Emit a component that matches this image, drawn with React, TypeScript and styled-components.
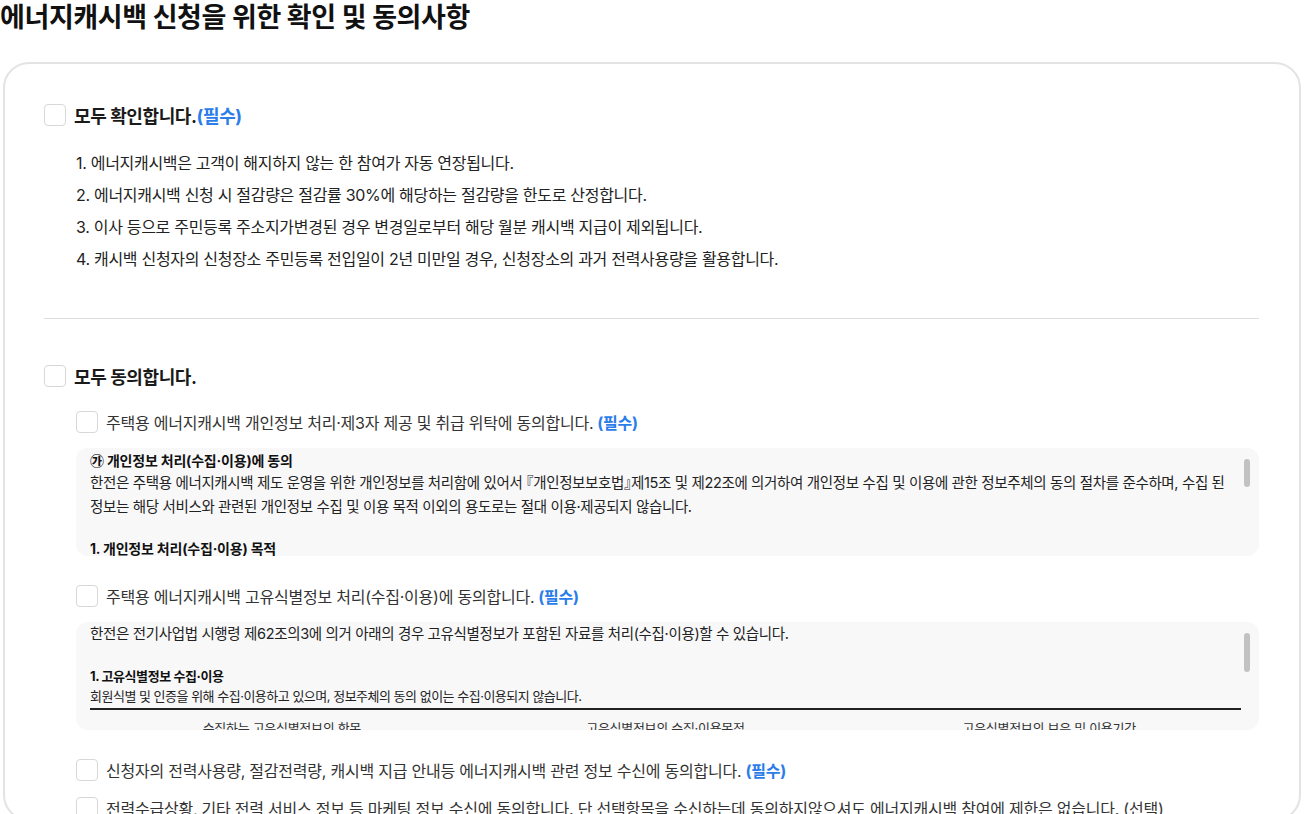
import React from 'react'
import styled, { createGlobalStyle } from 'styled-components'

const textDark = '#222222';
const blue = '#2b7de9';

const GlobalStyle = createGlobalStyle`
  html, body {
    margin: 0;
    padding: 0;
    background: #ffffff;
  }
  body {
    font-family: Inter, "Noto Sans CJK KR", sans-serif;
    color: ${textDark};
    overflow: hidden;
  }
`

const Page = styled.div`
  display: flex;
  flex-direction: column;
  height: 814px;
  overflow: hidden;
`

const Title = styled.h1`
  margin: 0;
  font-size: 27px;
  line-height: 36px;
  font-weight: 700;
  letter-spacing: -0.4px;
  color: #111111;
`

const Card = styled.section`
  margin: 26px 9px 0 3px;
  border: 2px solid #e3e3e3;
  border-radius: 26px;
  padding: 40px 40px 0 39px;
  flex: 1;
`

const CheckRow = styled.label<{ $main?: boolean }>`
  display: flex;
  align-items: center;
  gap: 8px;
  height: 22px;
  font-size: ${p => (p.$main ? '18px' : '16px')};
  font-weight: ${p => (p.$main ? 700 : 400)};
  letter-spacing: ${p => (p.$main ? '-0.4px' : '-0.23px')};
  color: ${p => (p.$main ? '#1a1a1a' : '#333333')};
  white-space: nowrap;
`

const Box = styled.input.attrs({ type: 'checkbox' })`
  appearance: none;
  margin: 0;
  flex: none;
  width: 22px;
  height: 22px;
  border: 1px solid #d8d8d8;
  border-radius: 4px;
  background: #ffffff;
  box-sizing: border-box;
`

const Required = styled.b<{ $tight?: boolean }>`
  color: ${blue};
  font-weight: 700;
  margin-left: ${p => (p.$tight ? '0' : '4px')};
`

const Notices = styled.ol`
  list-style: none;
  margin: 21px 0 0;
  padding: 0 0 0 32px;
  font-size: 16px;
  line-height: 32px;
  letter-spacing: -0.3px;
  color: ${textDark};
`

const Divider = styled.hr`
  margin: 43px 0 46px;
  border: 0;
  border-top: 1px solid #dedede;
`

const Agreements = styled.div`
  display: flex;
  flex-direction: column;
  gap: 16px;
  margin-top: 24px;
  padding-left: 32px;
`

const Agreement = styled.div<{ $withTerms?: boolean }>`
  display: flex;
  flex-direction: column;
  gap: 15px;
  margin-bottom: ${p => (p.$withTerms ? '13px' : '0')};
`

const Terms = styled.div`
  position: relative;
  background: #f8f8f9;
  border-radius: 12px;
  padding-right: 18px;
`

// the page is photographed without native scrollbars, so the thumb is drawn over the box
const Thumb = styled.span<{ $size: number }>`
  position: absolute;
  top: 11px;
  right: 9px;
  width: 6px;
  height: ${p => p.$size}px;
  border-radius: 3px;
  background: #c2c2c2;
`

const TermsScroll = styled.div`
  height: 108px;
  overflow-y: auto;
  box-sizing: border-box;
  padding: 0 0 0 14px;
  font-size: 14.5px;
  line-height: 24px;
  letter-spacing: -0.35px;
  color: ${textDark};
  scrollbar-width: none;

  &::-webkit-scrollbar {
    display: none;
  }
`

const TermsHead = styled.p<{ $first?: boolean; $large?: boolean }>`
  margin: ${p => (p.$first ? '3px 0 0' : '0')};
  font-size: ${p => (p.$large ? '14px' : '13px')};
  font-weight: 700;
  line-height: 20px;
  letter-spacing: ${p => (p.$large ? '-0.2px' : '-0.4px')};
  color: #111111;
`

const TermsText = styled.p<{ $small?: boolean }>`
  margin: 0;
  font-size: ${p => (p.$small ? '13px' : '14.5px')};
  line-height: ${p => (p.$small ? '20px' : '24px')};
  letter-spacing: ${p => (p.$small ? '-0.5px' : '-0.35px')};
`

// half-width 『 』 as in the original
const Law = styled.span`
  font-feature-settings: "halt";
`

const Gap = styled.div`
  height: 20px;
`

const Table = styled.table`
  width: 100%;
  margin-top: 2px;
  table-layout: fixed;
  border-collapse: collapse;
  border-top: 2px solid #222222;
  font-size: 13px;
  letter-spacing: -0.3px;
  th, td {
    padding: 6px 8px;
    text-align: center;
    font-weight: 400;
    color: #333333;
    border-bottom: 1px solid #dddddd;
  }
`

function Check({ children, main }: any) {
  return (
    <CheckRow $main={main}>
      <Box />
      <span>{children}</span>
    </CheckRow>
  )
}

export default function App() {
  return (
    <Page>
      <GlobalStyle />
      <Title>에너지캐시백 신청을 위한 확인 및 동의사항</Title>
      <Card>
        <Check main>
          모두 확인합니다.<Required $tight>(필수)</Required>
        </Check>
        <Notices>
          <li>1. 에너지캐시백은 고객이 해지하지 않는 한 참여가 자동 연장됩니다.</li>
          <li>2. 에너지캐시백 신청 시 절감량은 절감률 30%에 해당하는 절감량을 한도로 산정합니다.</li>
          <li>3. 이사 등으로 주민등록 주소지가변경된 경우 변경일로부터 해당 월분 캐시백 지급이 제외됩니다.</li>
          <li>4. 캐시백 신청자의 신청장소 주민등록 전입일이 2년 미만일 경우, 신청장소의 과거 전력사용량을 활용합니다.</li>
        </Notices>
        <Divider />
        <Check main>모두 동의합니다.</Check>
        <Agreements>
          <Agreement $withTerms>
            <Check>
              주택용 에너지캐시백 개인정보 처리·제3자 제공 및 취급 위탁에 동의합니다.<Required>(필수)</Required>
            </Check>
            <Terms>
              <TermsScroll>
                <TermsHead $first $large>㉮ 개인정보 처리(수집·이용)에 동의</TermsHead>
                <TermsText>
                  한전은 주택용 에너지캐시백 제도 운영을 위한 개인정보를 처리함에 있어서 <Law>『개인정보보호법』</Law>제15조 및 제22조에 의거하여 개인정보 수집 및 이용에 관한 정보주체의 동의 절차를 준수하며, 수집 된 정보는 해당 서비스와 관련된 개인정보 수집 및 이용 목적 이외의 용도로는 절대 이용·제공되지 않습니다.
                </TermsText>
                <Gap />
                <TermsHead $large>1. 개인정보 처리(수집·이용) 목적</TermsHead>
                <TermsText $small>에너지캐시백 참여 신청 확인, 절감량 산정 및 캐시백 지급, 관련 안내</TermsText>
                <Gap />
                <TermsHead $large>2. 처리(수집·이용)하는 개인정보 항목</TermsHead>
                <TermsText $small>성명, 고객번호, 휴대전화번호, 이메일, 주소, 계좌정보</TermsText>
                <Gap />
                <TermsHead $large>3. 개인정보의 보유 및 이용기간</TermsHead>
                <TermsText $small>참여 해지 후 5년간 보관 후 파기</TermsText>
              </TermsScroll>
              <Thumb $size={28} />
            </Terms>
          </Agreement>
          <Agreement $withTerms>
            <Check>
              주택용 에너지캐시백 고유식별정보 처리(수집·이용)에 동의합니다.<Required>(필수)</Required>
            </Check>
            <Terms>
              <TermsScroll>
                <TermsText>
                  한전은 전기사업법 시행령 제62조의3에 의거 아래의 경우 고유식별정보가 포함된 자료를 처리(수집·이용)할 수 있습니다.
                </TermsText>
                <Gap />
                <TermsHead>1. 고유식별정보 수집·이용</TermsHead>
                <TermsText $small>회원식별 및 인증을 위해 수집·이용하고 있으며, 정보주체의 동의 없이는 수집·이용되지 않습니다.</TermsText>
                <Table>
                  <thead>
                    <tr>
                      <th>수집하는 고유식별정보의 항목</th>
                      <th>고유식별정보의 수집·이용목적</th>
                      <th>고유식별정보의 보유 및 이용기간</th>
                    </tr>
                  </thead>
                  <tbody>
                    <tr>
                      <td>생년월일</td>
                      <td>본인 확인 및 캐시백 지급</td>
                      <td>참여 해지 후 5년</td>
                    </tr>
                  </tbody>
                </Table>
              </TermsScroll>
              <Thumb $size={39} />
            </Terms>
          </Agreement>
          <Agreement>
            <Check>
              신청자의 전력사용량, 절감전력량, 캐시백 지급 안내등 에너지캐시백 관련 정보 수신에 동의합니다.<Required>(필수)</Required>
            </Check>
          </Agreement>
          <Agreement>
            <Check>
              전력수급상황, 기타 전력 서비스 정보 등 마케팅 정보 수신에 동의합니다. 단 선택항목을 수신하는데 동의하지않으셔도 에너지캐시백 참여에 제한은 없습니다. (선택)
            </Check>
          </Agreement>
        </Agreements>
      </Card>
    </Page>
  )
}
